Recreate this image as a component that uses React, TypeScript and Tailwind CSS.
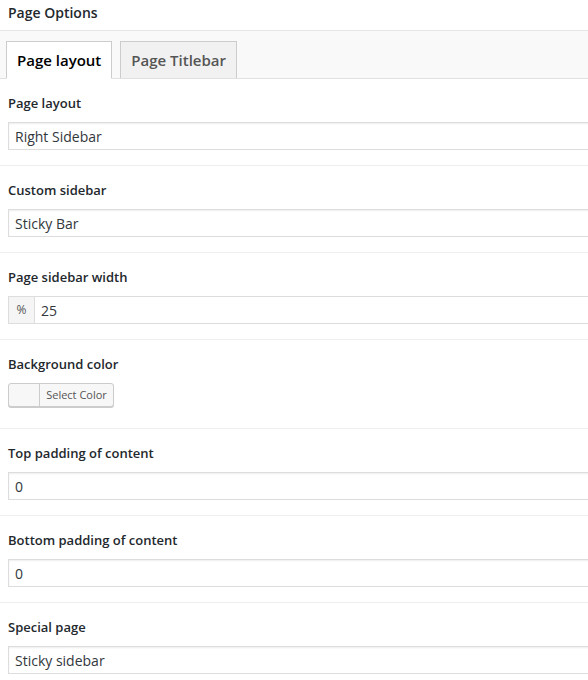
import React from 'react';

const font = { fontFamily: '"Open Sans", "Liberation Sans", sans-serif' };

function Field({ label, children, last }: { label: string; children: React.ReactNode; last?: boolean }) {
  return (
    <div className={`pt-[14px] pb-[15px] pl-2 ${last ? '' : 'border-b border-[#eeeeee]'}`}>
      <div className="text-[13px] leading-5 font-semibold text-[#23282d] mb-[9px]">{label}</div>
      {children}
    </div>
  );
}

function TextBox({ value }: { value: string }) {
  return (
    <div className="w-[600px] h-[28px] border border-[#dddddd] shadow-[inset_0_1px_2px_rgba(0,0,0,0.07)] bg-white flex items-center px-[6px] text-[14px] text-[#32373c]">
      {value}
    </div>
  );
}

export default function App() {
  return (
    <div className="w-[588px] h-[680px] overflow-hidden bg-white" style={font}>
      {/* Title */}
      <div className="h-[31px] border-b border-[#e5e5e5] px-2 pt-[3px] leading-5 text-[14px] font-semibold text-[#23282d]">
        Page Options
      </div>

      {/* Tabs */}
      <div className="h-[48px] bg-[#f9f9f9] border-b border-[#e1e1e1] flex items-end pl-[6px] gap-[8px]">
        <div className="h-[38px] -mb-px px-[10px] bg-white border border-[#cccccc] border-b-white flex items-center text-[15px] font-semibold text-[#000000]">
          Page layout
        </div>
        <div className="h-[37px] px-[10px] bg-[#f1f1f1] border border-[#cccccc] border-b-0 flex items-center text-[15px] font-semibold text-[#555555]">
          Page Titlebar
        </div>
      </div>

      <Field label="Page layout">
        <TextBox value="Right Sidebar" />
      </Field>

      <Field label="Custom sidebar">
        <TextBox value="Sticky Bar" />
      </Field>

      <Field label="Page sidebar width">
        <div className="w-[600px] h-[28px] border border-[#dddddd] bg-white flex text-[14px] text-[#32373c]">
          <div className="w-[26px] bg-[#f5f5f5] border-r border-[#dddddd] flex items-center justify-center text-[12px] text-[#555555]">%</div>
          <div className="flex items-center px-[6px]">25</div>
        </div>
      </Field>

      <div className="pt-[14px] pb-[21px] pl-2 border-b border-[#eeeeee]">
        <div className="text-[13px] leading-5 font-semibold text-[#23282d] mb-[9px]">Background color</div>
        <div className="w-[106px] h-[24px] rounded-[3px] border border-[#cccccc] bg-[#f7f7f7] shadow-[0_1px_0_#cccccc] flex">
          <div className="w-[31px] border-r border-[#cccccc]" />
          <div className="flex-1 flex items-center justify-center text-[11px] text-[#555555]">Select Color</div>
        </div>
      </div>

      <Field label="Top padding of content">
        <TextBox value="0" />
      </Field>

      <Field label="Bottom padding of content">
        <TextBox value="0" />
      </Field>

      <Field label="Special page" last>
        <TextBox value="Sticky sidebar" />
      </Field>
    </div>
  );
}
